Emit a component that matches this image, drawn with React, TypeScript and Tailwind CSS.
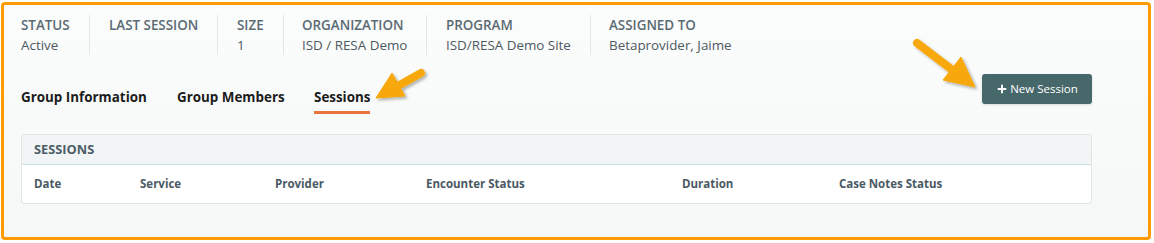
import React from 'react';
import { Plus } from 'lucide-react';

const summary = [
  { label: 'Status', value: 'Active', cls: 'w-[69px] pr-2' },
  { label: 'Last Session', value: '', cls: 'w-[128px] pl-[19px]' },
  { label: 'Size', value: '1', cls: 'w-[66px] pl-[19px]' },
  { label: 'Organization', value: 'ISD / RESA Demo', cls: 'w-[143px] pl-[18px]' },
  { label: 'Program', value: 'ISD/RESA Demo Site', cls: 'w-[164px] pl-[19px]' },
  { label: 'Assigned To', value: 'Betaprovider, Jaime', cls: 'pl-[18px]', last: true },
];

const columns = ['Date', 'Service', 'Provider', 'Encounter Status', 'Duration', 'Case Notes Status'];

// callout arrows drawn over the screenshot
const Arrows: React.FC = () => (
  <svg className="absolute left-0 top-0 pointer-events-none" width="1154" height="243" viewBox="0 0 1154 243">
    <defs>
      <filter id="shadow" x="-20%" y="-20%" width="150%" height="150%">
        <feDropShadow dx="2" dy="2" stdDeviation="1.5" floodColor="#000" floodOpacity="0.3" />
      </filter>
    </defs>
    <g fill="#f6a80b" stroke="#f6a80b" filter="url(#shadow)">
      <line x1="421" y1="73" x2="396" y2="87" strokeWidth="8" strokeLinecap="round" />
      <polygon points="376,98 392,73 405,96" strokeWidth="1" strokeLinejoin="round" />
      <line x1="917" y1="43" x2="955" y2="72" strokeWidth="8" strokeLinecap="round" />
      <polygon points="975,87 961,57 943,80" strokeWidth="1" strokeLinejoin="round" />
    </g>
  </svg>
);

export default function App() {
  return (
    <div className="relative w-[1154px] h-[243px] bg-white pt-[2px] pl-[1px] pr-[3px] pb-[3px] font-['Open_Sans',sans-serif]">
      <div className="h-full border-[3px] border-[#ff9a00] rounded-[4px] bg-gradient-to-b from-[#fbfcfc] to-[#f6f8f8] pl-[17px] pr-[56px] pt-[10px]">
        {/* Summary row */}
        <div className="flex h-[40px]">
          {summary.map((s) => (
            <div
              key={s.label}
              className={`${s.cls} h-[40px] leading-[20px] text-[13.4px] ${s.last ? '' : 'border-r border-[#e2e6e8]'}`}
            >
              <div className="uppercase font-semibold text-[#5a6a73]">{s.label}</div>
              <div className="text-[#4d5960]">{s.value}</div>
            </div>
          ))}
        </div>

        {/* Tabs + action */}
        <div className="flex justify-between items-start mt-[19px]">
          <div className="flex mt-[13px] text-[13.4px] font-bold leading-[20px] text-[#1c1c1c]">
            <div className="w-[156px]">Group Information</div>
            <div className="w-[137px]">Group Members</div>
            <div>
              <span className="inline-block pb-[4px] border-b-[3px] border-[#e8743b]">Sessions</span>
            </div>
          </div>
          <button className="h-[30px] w-[110px] rounded-[3px] bg-[#47686b] text-white text-[11.5px] flex items-center justify-center gap-[2px] shadow-sm">
            <Plus size={12} strokeWidth={4} />
            <span>New Session</span>
          </button>
        </div>

        {/* Sessions panel */}
        <div className="mt-[20px] border border-[#dfe4e6] rounded-[3px] bg-white overflow-hidden">
          <div className="h-[30px] bg-[#f2f5f6] border-b border-[#cde0e3] px-3 flex items-center text-[12.8px] font-bold uppercase text-[#4b5d66]">
            Sessions
          </div>
          <div className="h-[38px] px-3 grid grid-cols-[106px_135px_151px_256px_157px_1fr] items-center text-[11.5px] font-bold text-[#4a5a64]">
            {columns.map((c) => (
              <div key={c}>{c}</div>
            ))}
          </div>
        </div>
      </div>
      <Arrows />
    </div>
  );
}
